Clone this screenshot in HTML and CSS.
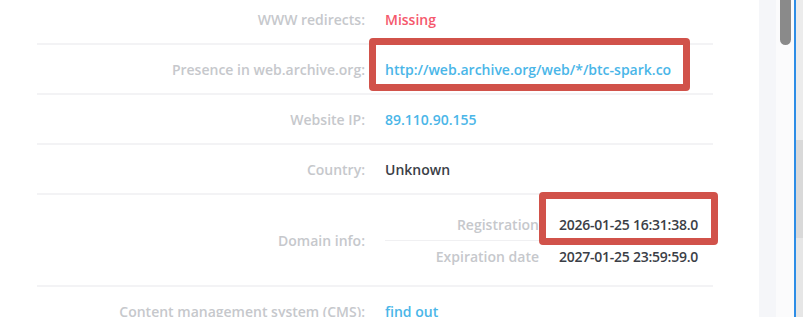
FILE: index.html
```html
<!DOCTYPE html>
<html lang="en">
<head>
    <meta charset="UTF-8">
    <title>Site info</title>
    <link rel="stylesheet" href="styles.css">
</head>
<body>
    <div class="page">
        <div class="report">
            <div class="info-list">
                <div class="info-row">
                    <div class="info-label">WWW redirects:</div>
                    <div class="info-value val-red">Missing</div>
                </div>
                <div class="info-row">
                    <div class="info-label">Presence in web.archive.org:</div>
                    <div class="info-value"><a class="val-link" href="#">http://web.archive.org/web/*/btc-spark.co</a></div>
                </div>
                <div class="info-row">
                    <div class="info-label">Website IP:</div>
                    <div class="info-value"><a class="val-link" href="#">89.110.90.155</a></div>
                </div>
                <div class="info-row">
                    <div class="info-label">Country:</div>
                    <div class="info-value val-dark">Unknown</div>
                </div>
                <div class="info-row domain-row">
                    <div class="info-label">Domain info:</div>
                    <div class="info-value">
                        <div class="sub-table">
                            <div class="sub-row">
                                <div class="sub-label">Registration</div>
                                <div class="sub-value">2026-01-25 16:31:38.0</div>
                            </div>
                            <div class="sub-row">
                                <div class="sub-label">Expiration date</div>
                                <div class="sub-value">2027-01-25 23:59:59.0</div>
                            </div>
                        </div>
                    </div>
                </div>
                <div class="info-row">
                    <div class="info-label">Content management system (CMS):</div>
                    <div class="info-value"><a class="val-link" href="#">find out</a></div>
                </div>
            </div>
            <div class="mark mark-archive"></div>
            <div class="mark mark-reg"></div>
        </div>
        <div class="side-gutter"></div>
        <div class="side-track"><div class="scroll-thumb"></div></div>
        <div class="side-edge"></div>
    </div>
</body>
</html>
```

FILE: styles.css
```css
body {
    margin: 0;
    font-family: 'Open Sans', 'DejaVu Sans', sans-serif;
    font-weight: 600;
    font-size: 14px;
    background: #fff;
    overflow: hidden;
}
.page {
    display: flex;
    height: 317px;
    overflow: hidden;
}
.report {
    position: relative;
    width: 759px;
    flex-shrink: 0;
    padding: 0 46px 0 37px;
    box-sizing: border-box;
}
.info-list {
    margin-top: -5px;
}
.info-row {
    display: flex;
    align-items: center;
    height: 50px;
    box-sizing: border-box;
    border-bottom: 2px solid #f3f3f5;
}
.info-label {
    width: 328px;
    flex-shrink: 0;
    text-align: right;
    color: #c6c8cc;
}
.info-value {
    flex: 1;
    padding-left: 20px;
}
.val-red {
    color: #f5586c;
}
.val-link {
    color: #4ab6e8;
    text-decoration: none;
}
.val-dark {
    color: #3b3e46;
}
.domain-row {
    height: 92px;
}
.sub-row {
    display: flex;
    align-items: center;
    height: 31px;
}
.sub-row + .sub-row {
    border-top: 1px solid #f0f0f2;
}
.sub-label {
    width: 154px;
    text-align: right;
    color: #c6c8cc;
}
.sub-value {
    padding-left: 20px;
    color: #3b3e46;
    letter-spacing: -0.25px;
}
/* red highlight frames drawn over the table */
.mark {
    position: absolute;
    border: 7px solid #d1524a;
    border-radius: 4px;
    box-sizing: border-box;
}
.mark-archive {
    left: 369px;
    top: 38px;
    width: 321px;
    height: 53px;
}
.mark-reg {
    left: 539px;
    top: 192px;
    width: 179px;
    height: 53px;
}
.side-gutter {
    width: 17px;
    background: #f5f6f9;
}
.side-track {
    width: 18px;
    background: #fbfbfc;
    border-right: 2px solid #2d8de6;
}
.scroll-thumb {
    width: 11px;
    height: 45px;
    margin-left: 4px;
    background: #8a8a8a;
    border-radius: 0 0 6px 6px;
}
.side-edge {
    flex: 1;
    background: linear-gradient(#ececec 0, #ececec 140px, #d9d9d9 140px, #d9d9d9 238px, #e6e6e6 238px);
}
```
